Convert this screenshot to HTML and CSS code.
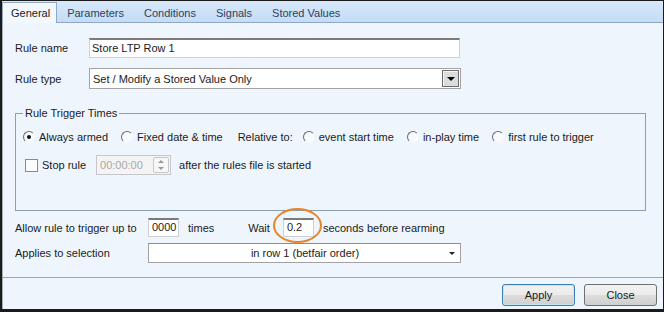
FILE: index.html
```html
<!DOCTYPE html>
<html lang="en">
<head>
    <meta charset="UTF-8">
    <title>Rule Editor</title>
    <link rel="stylesheet" href="styles.css">
</head>
<body>
<div class="window">
    <div class="tabs">
        <span class="tab active">General</span>
        <span class="tab">Parameters</span>
        <span class="tab">Conditions</span>
        <span class="tab">Signals</span>
        <span class="tab">Stored Values</span>
    </div>

    <div class="panel">
        <div class="row">
            <span class="label">Rule name</span>
            <div class="textbox name-box">Store LTP Row 1</div>
        </div>

        <div class="row row-type">
            <span class="label">Rule type</span>
            <div class="combo type-box">
                <span class="combo-text">Set / Modify a Stored Value Only</span>
                <span class="drop-btn"><span class="arrow"></span></span>
            </div>
        </div>

        <fieldset class="group">
            <legend>Rule Trigger Times</legend>
            <div class="options">
                <span class="option"><span class="radio checked"></span>Always armed</span>
                <span class="option"><span class="radio"></span>Fixed date &amp; time</span>
                <span class="relative">Relative to:</span>
                <span class="option"><span class="radio"></span>event start time</span>
                <span class="option"><span class="radio"></span>in-play time</span>
                <span class="option"><span class="radio"></span>first rule to trigger</span>
            </div>
            <div class="options stop-row">
                <span class="checkbox"></span>
                <span>Stop rule</span>
                <div class="spinner">
                    <span class="spin-text">00:00:00</span>
                    <span class="spin-btns">
                        <span class="spin-up"></span>
                        <span class="spin-down"></span>
                    </span>
                </div>
                <span class="after">after the rules file is started</span>
            </div>
        </fieldset>

        <div class="row row-trigger">
            <span class="label wide">Allow rule to trigger up to</span>
            <div class="textbox small-box">0000</div>
            <span class="times">times</span>
            <span class="wait">Wait</span>
            <div class="wait-box">
                <div class="textbox small-box">0.2</div>
                <span class="ring"></span>
            </div>
            <span class="seconds">seconds before rearming</span>
        </div>

        <div class="row row-applies">
            <span class="label wide">Applies to selection</span>
            <div class="combo applies-box">
                <span class="combo-text centered">in row 1 (betfair order)</span>
                <span class="small-arrow"></span>
            </div>
        </div>
    </div>

    <div class="footer">
        <button class="btn default">Apply</button>
        <button class="btn">Close</button>
    </div>
</div>
</body>
</html>
```

FILE: styles.css
```css
* {
    box-sizing: border-box;
}

body {
    margin: 0;
    background-color: #1b1b1b;
    font-family: 'Liberation Sans', Arial, sans-serif;
    font-size: 11px;
    color: #1b1b1b;
}

.window {
    width: 664px;
    height: 312px;
    border-style: solid;
    border-color: #1b1b1b;
    border-width: 1px 1px 3px 2px;
    background-color: #eef5fd;
    display: flex;
    flex-direction: column;
}

/* tab strip */
.tabs {
    flex: none;
    height: 22px;
    display: flex;
    align-items: flex-end;
    background: linear-gradient(#d7e8fa, #c5dcf5);
    border-bottom: 1px solid #8ea8c6;
}

.tab {
    height: 21px;
    margin-bottom: -1px;
    padding: 2px 9px 0;
    line-height: 17px;
    border: 1px solid transparent;
    border-bottom: none;
    color: #2a4164;
}

.tab.active {
    padding: 2px 6px 0 8px;
    background-color: #f3f8fe;
    border-color: #8ea8c6;
    color: #1b1b1b;
}

/* main page */
.panel {
    flex: 1;
    border-left: 1px solid #a5adb6;
    padding: 15px 17px 0 12px;
    display: flex;
    flex-direction: column;
}

.row {
    display: flex;
    align-items: center;
    height: 20px;
}

.row-type {
    margin-top: 10px;
    height: 21px;
}

.label {
    flex: none;
    width: 74px;
}

.label.wide {
    width: 133px;
}

.textbox {
    height: 20px;
    background-color: #fff;
    border: 1px solid #cdd0d4;
    border-top: 2px solid #7a7a7a;
    padding-left: 2px;
    line-height: 16px;
}

.name-box {
    width: 371px;
}

.combo {
    height: 100%;
    display: flex;
    align-items: center;
    background-color: #fff;
    border: 1px solid #a3a3a3;
}

.type-box {
    width: 372px;
    padding-left: 3px;
}

.combo-text {
    flex: 1;
}

.drop-btn {
    width: 17px;
    height: 17px;
    margin-right: 1px;
    border: 1px solid #6c6c6c;
    box-shadow: inset 1px 1px 0 #f6f6f6;
    background-color: #dcdcdc;
    display: flex;
    align-items: center;
    justify-content: center;
}

.arrow {
    border-left: 4px solid transparent;
    border-right: 4px solid transparent;
    border-top: 4px solid #000;
}

/* group box */
.group {
    margin: 18px 0 0;
    padding: 7px 6px 35px 7px;
    border: 1px solid #8a9fb1;
    min-width: 0;
}

.group legend {
    padding: 0 2px;
    line-height: 13px;
}

.options {
    display: flex;
    align-items: center;
    height: 20px;
    white-space: nowrap;
}

.option {
    display: flex;
    align-items: center;
    margin-right: 13px;
}

.relative {
    margin-right: 10px;
    margin-left: 2px;
}

.radio {
    position: relative;
    width: 12px;
    height: 12px;
    margin-right: 4px;
    border-radius: 50%;
    background-color: #f8fbfe;
    border: 1px solid;
    border-color: #6a6a6a #f4f8fd #f4f8fd #6a6a6a;
}

.radio.checked::after {
    content: '';
    position: absolute;
    left: 3px;
    top: 3px;
    width: 4px;
    height: 4px;
    border-radius: 50%;
    background-color: #111;
}

.stop-row {
    margin-top: 8px;
}

.checkbox {
    width: 13px;
    height: 13px;
    margin: 0 4px 0 2px;
    border: 1px solid #8a8a8a;
    background-color: #fcfcfc;
}

.spinner {
    width: 75px;
    height: 20px;
    margin-left: 10px;
    display: flex;
    align-items: center;
    border: 1px solid #c4c8cc;
    background-color: #f4f4f4;
    color: #a8a8a8;
    padding-left: 3px;
}

.spin-text {
    flex: 1;
}

.spin-btns {
    width: 16px;
    height: 16px;
    margin-right: 1px;
    border: 1px solid #c8c8c8;
    border-radius: 2px;
    background-color: #f7f7f7;
    display: flex;
    flex-direction: column;
    align-items: center;
    justify-content: space-around;
}

.spin-up {
    border-left: 3px solid transparent;
    border-right: 3px solid transparent;
    border-bottom: 3px solid #9a9a9a;
}

.spin-down {
    border-left: 3px solid transparent;
    border-right: 3px solid transparent;
    border-top: 3px solid #9a9a9a;
}

.after {
    margin-left: 8px;
}

/* lower rows */
.row-trigger {
    margin-top: 7px;
    height: 19px;
}

.small-box {
    width: 31px;
    height: 19px;
    padding-left: 3px;
    line-height: 15px;
}

.times {
    margin-left: 9px;
}

.wait {
    margin-left: 34px;
    margin-right: 13px;
}

.wait-box {
    position: relative;
}

.ring {
    position: absolute;
    left: -10px;
    top: -10px;
    width: 49px;
    height: 35px;
    border: 2px solid #e8842a;
    border-radius: 50%;
}

.seconds {
    margin-left: 9px;
}

.row-applies {
    margin-top: 6px;
}

.applies-box {
    width: 313px;
    padding-left: 12px;
    border-top-color: #8c8c8c;
}

.centered {
    text-align: center;
}

.small-arrow {
    margin-right: 5px;
    border-left: 3px solid transparent;
    border-right: 3px solid transparent;
    border-top: 3px solid #222;
}

/* buttons */
.footer {
    flex: none;
    height: 32px;
    border-top: 1px solid #9aa6b2;
    border-left: 1px solid #a5adb6;
    display: flex;
    justify-content: flex-end;
    padding: 6px 6px 0 0;
}

.btn {
    width: 73px;
    height: 22px;
    margin-left: 9px;
    font-family: inherit;
    font-size: 11px;
    color: #1b1b1b;
    border: 1px solid #707070;
    border-radius: 3px;
    background: linear-gradient(#f2f2f2 0%, #ebebeb 50%, #dddddd 51%, #cfcfcf 100%);
}

.btn.default {
    border-color: #3c7fb1;
    box-shadow: inset 0 0 0 1px #c4e5f6;
}
```
